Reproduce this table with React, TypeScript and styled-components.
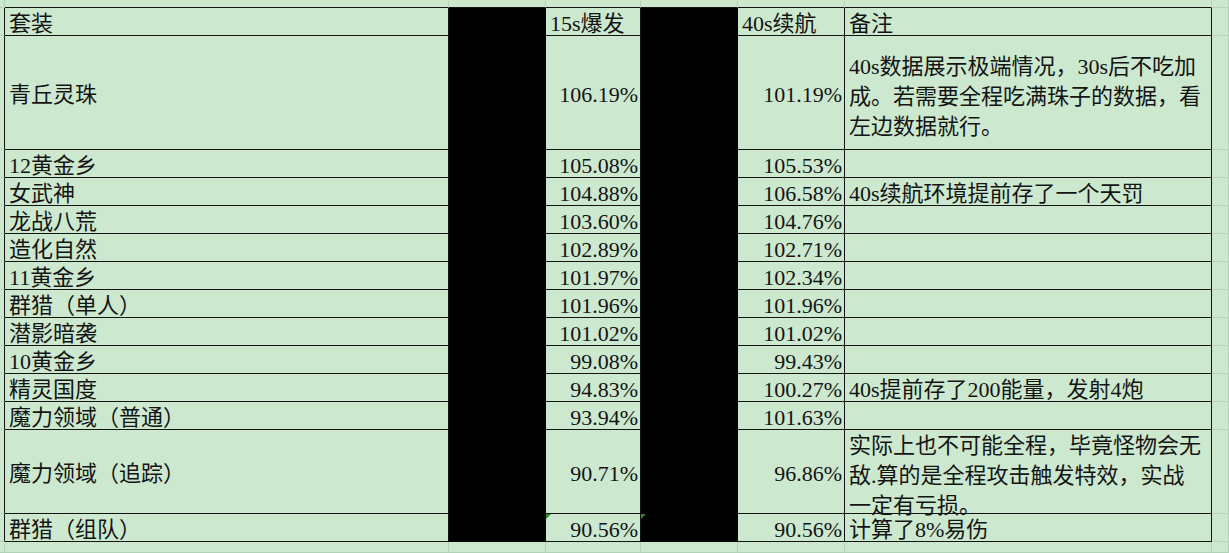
import React from 'react';
import styled, { createGlobalStyle } from 'styled-components';

const GlobalStyle = createGlobalStyle`
  html, body {
    margin: 0;
    padding: 0;
    background: #cce8cf;
  }
`;

const SHEET_BG = '#cce8cf';
const GRID_LINE = '#b3d3b8';
const INK = '#141414';

// column widths: row-header strip, A..F, then the strip past the table
const COLS = [5, 444, 97, 95, 97, 107, 367, 17];
const ROWS = [8, 28, 114, 28, 28, 28, 28, 28, 28, 28, 28, 28, 28, 84, 28, 11];

type Row = { name: string; burst: string; endure: string; note: string[]; header?: boolean };

const data: Row[] = [
  { name: '套装', burst: '15s爆发', endure: '40s续航', note: ['备注'], header: true },
  {
    name: '青丘灵珠',
    burst: '106.19%',
    endure: '101.19%',
    note: ['40s数据展示极端情况，30s后不吃加', '成。若需要全程吃满珠子的数据，看', '左边数据就行。'],
  },
  { name: '12黄金乡', burst: '105.08%', endure: '105.53%', note: [] },
  { name: '女武神', burst: '104.88%', endure: '106.58%', note: ['40s续航环境提前存了一个天罚'] },
  { name: '龙战八荒', burst: '103.60%', endure: '104.76%', note: [] },
  { name: '造化自然', burst: '102.89%', endure: '102.71%', note: [] },
  { name: '11黄金乡', burst: '101.97%', endure: '102.34%', note: [] },
  { name: '群猎（单人）', burst: '101.96%', endure: '101.96%', note: [] },
  { name: '潜影暗袭', burst: '101.02%', endure: '101.02%', note: [] },
  { name: '10黄金乡', burst: '99.08%', endure: '99.43%', note: [] },
  { name: '精灵国度', burst: '94.83%', endure: '100.27%', note: ['40s提前存了200能量，发射4炮'] },
  { name: '魔力领域（普通）', burst: '93.94%', endure: '101.63%', note: [] },
  {
    name: '魔力领域（追踪）',
    burst: '90.71%',
    endure: '96.86%',
    note: ['实际上也不可能全程，毕竟怪物会无', '敌.算的是全程攻击触发特效，实战', '一定有亏损。'],
  },
  { name: '群猎（组队）', burst: '90.56%', endure: '90.56%', note: ['计算了8%易伤'] },
];

const Sheet = styled.div`
  display: grid;
  grid-template-columns: ${COLS.map((c, i) => (i === COLS.length - 1 ? '1fr' : `${c}px`)).join(' ')};
  grid-template-rows: ${ROWS.map((r) => `${r}px`).join(' ')};
  width: 1229px;
  height: 553px;
  overflow: hidden;
  background: ${SHEET_BG};
  font-family: 'Liberation Serif', 'Noto Sans CJK SC', serif;
  font-size: 22px;
  color: ${INK};
`;

const Cell = styled.div<{ $right: string; $bottom: string }>`
  position: relative;
  box-sizing: border-box;
  min-width: 0;
  display: flex;
  align-items: center;
  border-right: 1px solid ${(p) => p.$right};
  border-bottom: 1px solid ${(p) => p.$bottom};
  white-space: nowrap;
  overflow: visible;
`;

const TextCell = styled(Cell)<{ $align?: 'left' | 'right' }>`
  justify-content: ${(p) => (p.$align === 'right' ? 'flex-end' : 'flex-start')};
  padding: 5px 2px 0 4px;
  line-height: 1;
`;

const MaskCell = styled(Cell)`
  background: #000;
`;

const NoteCell = styled(Cell)`
  padding: 5px 4px 0;
  line-height: 1;
`;

const NoteText = styled.div`
  line-height: 30px;
  padding-top: 3px;
`;

const NoteLine = styled.span`
  display: block;
`;

const Marker = styled.span`
  position: absolute;
  top: 0;
  left: 0;
  width: 0;
  height: 0;
  border-top: 5px solid #2f8a2f;
  border-right: 5px solid transparent;
  z-index: 2;
`;

const App: React.FC = () => {
  const cells: React.ReactNode[] = [];
  const lastTableRow = data.length; // rows 1..14 are the table

  ROWS.forEach((_, r) => {
    COLS.forEach((__, c) => {
      const key = `${r}-${c}`;
      const inTableRow = r >= 1 && r <= lastTableRow;
      const inTableCol = c >= 1 && c <= 6;

      if (!inTableRow || !inTableCol) {
        // ghost cells around the table keep the faint sheet grid
        const right = c === 0 && inTableRow ? INK : GRID_LINE;
        const bottom = r === 0 && inTableCol ? INK : GRID_LINE;
        cells.push(<Cell key={key} $right={right} $bottom={bottom} />);
        return;
      }

      const row = data[r - 1];
      const isLast = r === lastTableRow;

      if (c === 2 || c === 4) {
        cells.push(
          <MaskCell key={key} $right="#000" $bottom="#000">
            {isLast && c === 4 && <Marker />}
          </MaskCell>
        );
        return;
      }

      if (c === 1) {
        cells.push(
          <TextCell key={key} $right={INK} $bottom={INK}>
            {row.name}
          </TextCell>
        );
      } else if (c === 3 || c === 5) {
        const value = c === 3 ? row.burst : row.endure;
        cells.push(
          <TextCell key={key} $right={INK} $bottom={INK} $align={row.header ? 'left' : 'right'}>
            {isLast && c === 3 && <Marker />}
            {value}
          </TextCell>
        );
      } else {
        cells.push(
          <NoteCell key={key} $right={INK} $bottom={INK}>
            {row.note.length > 1 ? (
              <NoteText>
                {row.note.map((line) => (
                  <NoteLine key={line}>{line}</NoteLine>
                ))}
              </NoteText>
            ) : (
              row.note[0]
            )}
          </NoteCell>
        );
      }
    });
  });

  return (
    <>
      <GlobalStyle />
      <Sheet>{cells}</Sheet>
    </>
  );
};

export default App;
